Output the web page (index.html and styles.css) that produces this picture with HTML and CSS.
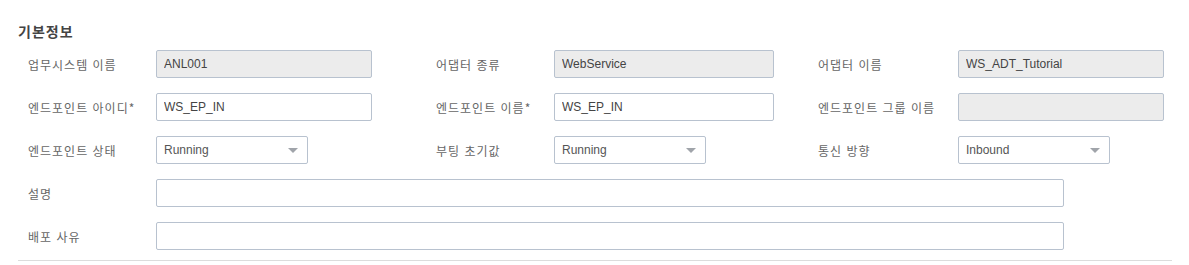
FILE: index.html
```html
<!DOCTYPE html>
<html lang="ko">
<head>
    <meta charset="UTF-8">
    <title>기본정보</title>
    <link rel="stylesheet" href="styles.css">
</head>
<body>
    <div class="section">
        <h2 class="section-title">기본정보</h2>
        <div class="form-grid">
            <label class="lbl">업무시스템 이름</label>
            <div class="cell"><input type="text" class="inp w215" value="ANL001" readonly></div>
            <label class="lbl">어댑터 종류</label>
            <div class="cell"><input type="text" class="inp w219" value="WebService" readonly></div>
            <label class="lbl">어댑터 이름</label>
            <div class="cell"><input type="text" class="inp w205" value="WS_ADT_Tutorial" readonly></div>

            <label class="lbl">엔드포인트 아이디*</label>
            <div class="cell"><input type="text" class="inp w215" value="WS_EP_IN"></div>
            <label class="lbl">엔드포인트 이름*</label>
            <div class="cell"><input type="text" class="inp w219" value="WS_EP_IN"></div>
            <label class="lbl">엔드포인트 그룹 이름</label>
            <div class="cell"><input type="text" class="inp w205" value="" readonly></div>

            <label class="lbl">엔드포인트 상태</label>
            <div class="cell"><div class="sel"><span>Running</span><i class="caret"></i></div></div>
            <label class="lbl">부팅 초기값</label>
            <div class="cell"><div class="sel"><span>Running</span><i class="caret"></i></div></div>
            <label class="lbl">통신 방향</label>
            <div class="cell"><div class="sel"><span>Inbound</span><i class="caret"></i></div></div>

            <label class="lbl">설명</label>
            <div class="cell wide"><input type="text" class="inp w907" value=""></div>

            <label class="lbl">배포 사유</label>
            <div class="cell wide"><input type="text" class="inp w907" value=""></div>
        </div>
    </div>
</body>
</html>
```

FILE: styles.css
```css
body {
    margin: 0;
    background: #fff;
    font-family: "Noto Sans CJK KR", "Liberation Sans", sans-serif;
}
.section {
    margin: 0 17px 0 18px;
    padding: 21px 0 10px;
    border-bottom: 1px solid #dcdcdc;
}
.section-title {
    margin: 0 0 9px;
    font-size: 14px;
    line-height: 20px;
    font-weight: bold;
    letter-spacing: 1px;
    color: #444;
}
.form-grid {
    display: grid;
    grid-template-columns: 128px 280px 118px 264px 140px 1fr;
    row-gap: 15px;
    align-items: center;
    padding-left: 10px;
}
.lbl {
    font-size: 12px;
    letter-spacing: 1px;
    color: #666;
    white-space: nowrap;
}
.cell {
    display: flex;
    height: 28px;
}
.cell.wide {
    grid-column: 2 / 7;
}
.inp {
    box-sizing: border-box;
    height: 28px;
    padding: 0 7px;
    border: 1px solid #b8c2cf;
    border-radius: 2px;
    background: #fff;
    font-family: "Liberation Sans", "Noto Sans CJK KR", sans-serif;
    font-size: 12px;
    color: #444;
    outline: none;
}
.inp[readonly] {
    background: #ececec;
}
.w215 { width: 216px; }
.w219 { width: 220px; }
.w205 { width: 206px; }
.w907 { width: 908px; }
.sel {
    box-sizing: border-box;
    width: 152px;
    height: 28px;
    padding: 0 9px 0 7px;
    border: 1px solid #b8c2cf;
    border-radius: 2px;
    display: flex;
    align-items: center;
    justify-content: space-between;
    font-family: "Liberation Sans", sans-serif;
    font-size: 12px;
    color: #555;
}
.caret {
    width: 0;
    height: 0;
    border-left: 5px solid transparent;
    border-right: 5px solid transparent;
    border-top: 5px solid #a0a4aa;
}
```
